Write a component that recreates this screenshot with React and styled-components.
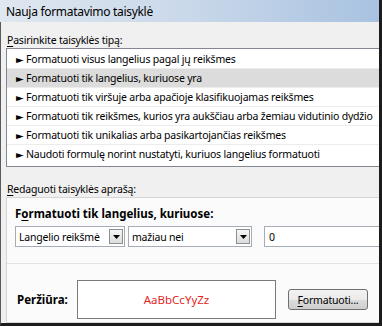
import React from "react";
import styled, { createGlobalStyle } from "styled-components";

const GlobalStyle = createGlobalStyle`
  body {
    margin: 0;
    background: #ffffff;
  }
  #root {
    width: 382px;
    height: 326px;
    overflow: hidden;
  }
`;

const rules = [
  "Formatuoti visus langelius pagal jų reikšmes",
  "Formatuoti tik langelius, kuriuose yra",
  "Formatuoti tik viršuje arba apačioje klasifikuojamas reikšmes",
  "Formatuoti tik reikšmes, kurios yra aukščiau arba žemiau vidutinio dydžio",
  "Formatuoti tik unikalias arba pasikartojančias reikšmes",
  "Naudoti formulę norint nustatyti, kuriuos langelius formatuoti",
];

const DownArrow = () => (
  <svg width="7" height="4" viewBox="0 0 7 4">
    <path d="M0 0h7L3.5 4z" fill="#000" />
  </svg>
);

const App = () => {
  return (
    <>
      <GlobalStyle />
      <Dialog>
        <TitleBar>Nauja formatavimo taisyklė</TitleBar>
        <Body>
          <Label>
            <u>P</u>asirinkite taisyklės tipą:
          </Label>
          <ListBox>
            {rules.map((r, i) => (
              <Row key={r} selected={i === 1}>
                <Bullet>►</Bullet>
                {r}
              </Row>
            ))}
          </ListBox>
          <Label>
            <u>R</u>edaguoti taisyklės aprašą:
          </Label>
          <Panel>
            <Heading>
              F<u>o</u>rmatuoti tik langelius, kuriuose:
            </Heading>
            <Controls>
              <Combo width={110}>
                <span>Langelio reikšmė</span>
                <ArrowBtn>
                  <DownArrow />
                </ArrowBtn>
              </Combo>
              <Combo width={124}>
                <span>mažiau nei</span>
                <ArrowBtn>
                  <DownArrow />
                </ArrowBtn>
              </Combo>
              <TextInput>0</TextInput>
            </Controls>
            <Divider />
            <PreviewRow>
              <PreviewLabel>Peržiūra:</PreviewLabel>
              <PreviewBox>AaBbCcYyZz</PreviewBox>
              <Button>
                <u>F</u>ormatuoti...
              </Button>
            </PreviewRow>
          </Panel>
        </Body>
      </Dialog>
    </>
  );
};

const Dialog = styled.div`
  width: 382px;
  height: 326px;
  display: flex;
  flex-direction: column;
  overflow: hidden;
  font-family: "Noto Sans", "Open Sans", sans-serif;
  font-size: 10.5px;
  letter-spacing: -0.2px;
  color: #000;
  u {
    text-decoration-thickness: 1px;
    text-underline-offset: 2px;
  }
`;

const TitleBar = styled.div`
  height: 22px;
  flex: none;
  display: flex;
  align-items: center;
  padding-left: 6px;
  font-size: 12px;
  letter-spacing: -0.3px;
  background: linear-gradient(90deg, #dfe7f0 0%, #c9d8ea 50%, #a8c2e0 100%);
  border-right: 3px solid #1c1c1c;
`;

const Body = styled.div`
  flex: 1;
  min-height: 0;
  overflow: hidden;
  background: #f0f0f0;
  border-left: 1px solid #5a5a5a;
  border-right: 3px solid #1c1c1c;
  border-bottom: 3px solid #1c1c1c;
  padding: 10px 0 0 5px;
  display: flex;
  flex-direction: column;
`;

const Label = styled.div`
  height: 16px;
  line-height: 16px;
  padding-left: 1px;
  white-space: nowrap;
`;

const ListBox = styled.div`
  margin: 0 -20px 14px 0;
  background: #fff;
  border: 1px solid #828790;
  padding: 1px 0 3px;
`;

const Row = styled.div`
  height: 18px;
  display: flex;
  align-items: center;
  padding-left: 9px;
  white-space: nowrap;
  background: ${(p) => (p.selected ? "#dcdcdc" : "#fff")};
  border-bottom: 1px solid #ececec;
  &:last-child {
    border-bottom: none;
  }
`;

const Bullet = styled.span`
  flex: none;
  width: 10px;
  font-size: 10px;
  font-family: "DejaVu Sans", sans-serif;
`;

const Panel = styled.div`
  margin: 0 -20px 0 0;
  flex: 1;
  background: #fbfbfb;
  border: 1px solid #d6d6d6;
  padding: 8px 0 0 8px;
`;

const Heading = styled.div`
  font-weight: bold;
  font-size: 11.5px;
  letter-spacing: 0;
  height: 16px;
  line-height: 16px;
`;

const Controls = styled.div`
  display: flex;
  gap: 3px;
  margin-top: 4px;
`;

const Combo = styled.div`
  flex: none;
  width: ${(p) => p.width}px;
  height: 21px;
  box-sizing: border-box;
  border: 1px solid #a5acb5;
  background: #fff;
  display: flex;
  align-items: center;
  justify-content: space-between;
  padding: 0 1px 0 3px;
  white-space: nowrap;
`;

const ArrowBtn = styled.div`
  flex: none;
  width: 14px;
  height: 15px;
  box-sizing: border-box;
  border: 1px solid #8e8f8f;
  background: linear-gradient(#f6f6f6, #dcdcdc);
  display: flex;
  align-items: center;
  justify-content: center;
`;

const TextInput = styled.div`
  flex: 1;
  margin-left: 9px;
  height: 21px;
  box-sizing: border-box;
  border: 1px solid #a5acb5;
  background: #fff;
  display: flex;
  align-items: center;
  padding-left: 4px;
`;

const Divider = styled.div`
  height: 1px;
  background: #e3e3e3;
  margin: 16px 0 0 -8px;
`;

const PreviewRow = styled.div`
  display: flex;
  align-items: center;
  margin-top: 16px;
`;

const PreviewLabel = styled.div`
  flex: none;
  font-weight: bold;
  font-size: 11.5px;
  letter-spacing: 0;
  width: 60px;
  padding-left: 2px;
`;

const PreviewBox = styled.div`
  flex: none;
  width: 199px;
  height: 39px;
  box-sizing: border-box;
  border: 1px solid #7a7a7a;
  background: #fff;
  color: #e02828;
  font-size: 11.5px;
  letter-spacing: 0;
  display: flex;
  align-items: center;
  justify-content: center;
`;

const Button = styled.div`
  flex: none;
  margin-left: 12px;
  width: 80px;
  height: 21px;
  box-sizing: border-box;
  border: 1px solid #707070;
  border-radius: 3px;
  background: linear-gradient(#f2f2f2 0%, #ebebeb 50%, #dddddd 51%, #cfcfcf 100%);
  display: flex;
  align-items: center;
  justify-content: center;
`;

export default App;
